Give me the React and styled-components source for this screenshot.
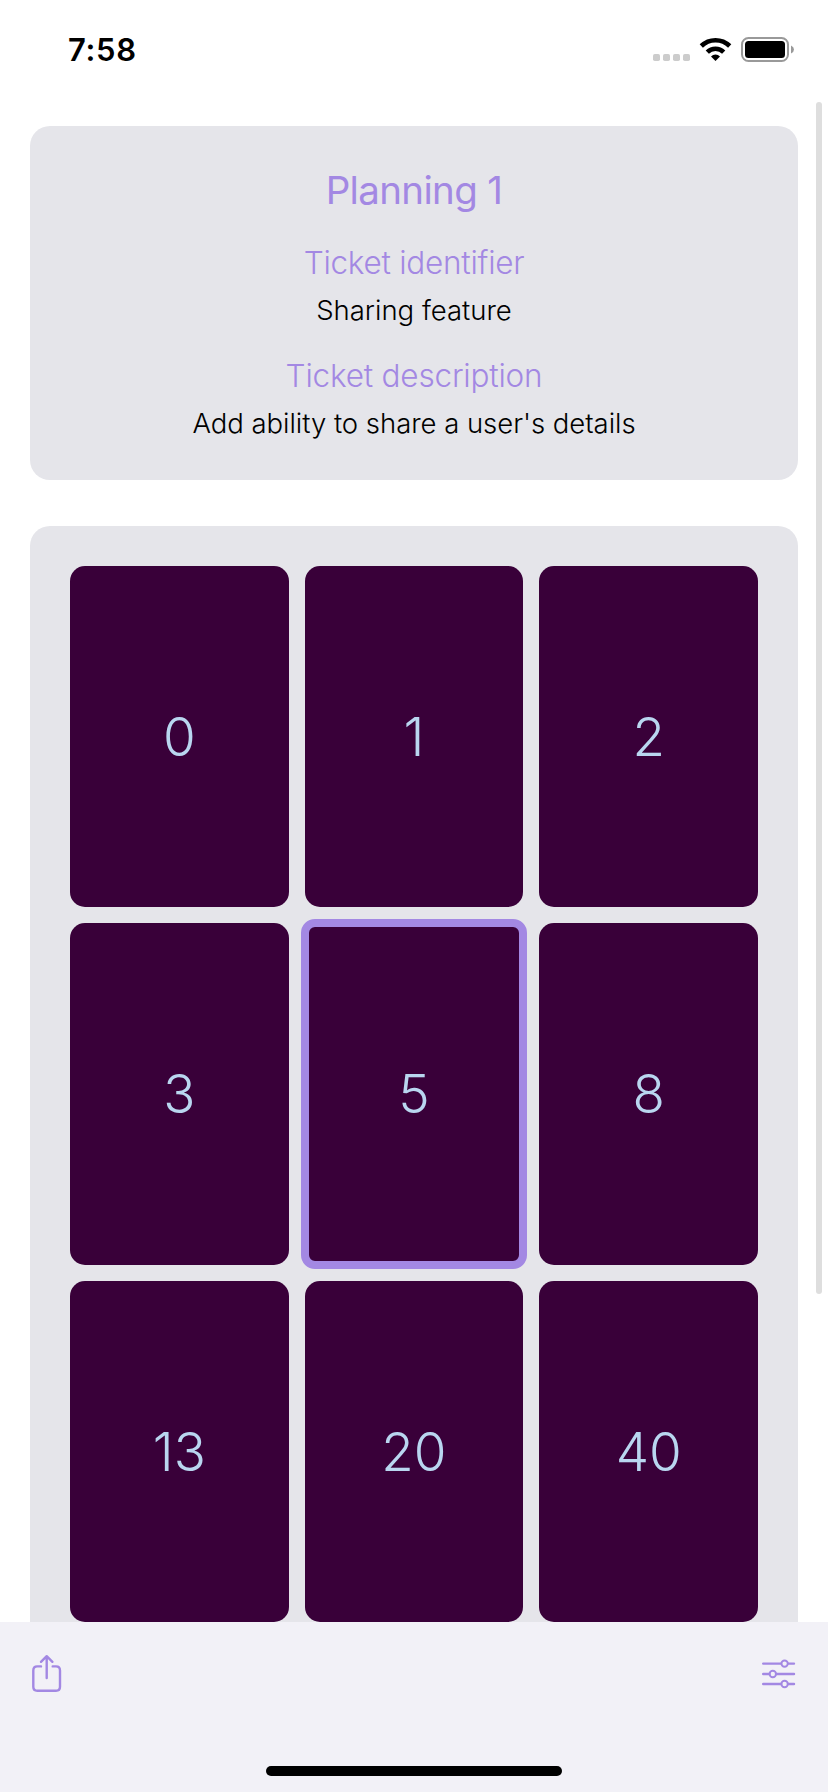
import React from 'react';
import styled, { createGlobalStyle } from 'styled-components';

const GlobalStyle = createGlobalStyle`
  * { box-sizing: border-box; }
  body {
    margin: 0;
    background: #fff;
    font-family: Inter, "Liberation Sans", sans-serif;
  }
`;

const Screen = styled.div`
  position: relative;
  display: flex;
  flex-direction: column;
  width: 828px;
  height: 1792px;
  overflow: hidden;
  background: #fff;
`;

const StatusBar = styled.header`
  display: flex;
  flex: none;
  justify-content: space-between;
  height: 96px;
  padding: 34px 34px 0 68px;
`;

const Clock = styled.time`
  height: 32px;
  line-height: 32px;
  font-size: 31px;
  font-weight: 600;
  letter-spacing: 0.7px;
  color: #000;
`;

const StatusIcons = styled.svg`
  display: block;
  width: 142px;
  height: 32px;
`;

const Content = styled.main`
  display: flex;
  flex: 1;
  flex-direction: column;
  gap: 46px;
  min-height: 0;
  padding: 30px 30px 0;
  overflow: hidden;
`;

const Panel = styled.section`
  flex: none;
  padding: 40px;
  border-radius: 20px;
  background: #e5e5ea;
`;

const TicketPanel = styled(Panel)`
  display: flex;
  flex-direction: column;
  align-items: center;
  height: 354px;
  white-space: nowrap;
`;

const Title = styled.h1`
  margin: 0;
  line-height: 48px;
  font-size: 38.5px;
  font-weight: 400;
  letter-spacing: ${(p) => p.$spacing}px;
  color: #a388e3;
`;

const Label = styled.h2`
  margin: 30px 0 0;
  line-height: 38px;
  font-size: 31.5px;
  font-weight: 300;
  letter-spacing: ${(p) => p.$spacing}px;
  color: #a388e3;
`;

const Value = styled.p`
  margin: 11px 0 0;
  line-height: 34px;
  font-size: 27.5px;
  font-weight: 300;
  letter-spacing: ${(p) => p.$spacing}px;
  color: #000;
`;

const CardGrid = styled.div`
  display: grid;
  grid-template-columns: repeat(3, 1fr);
  grid-auto-rows: 341.3px;
  gap: 16px;
`;

const Card = styled.button`
  position: relative;
  display: flex;
  align-items: center;
  justify-content: center;
  padding: 1px 0 0;
  border: 0;
  border-radius: 15px;
  background: #390039;
  font-family: inherit;
  font-size: 53px;
  font-weight: 300;
  color: #b9d6f0;

  &::after {
    content: "";
    display: ${(p) => (p.$selected ? 'block' : 'none')};
    position: absolute;
    inset: -4px;
    border: 8px solid #a388e3;
    border-radius: 14px;
  }
`;

const Toolbar = styled.footer`
  display: flex;
  flex: none;
  flex-direction: column;
  justify-content: space-between;
  align-items: center;
  height: 170px;
  padding: 30px 30px 16px;
  background: #f2f1f7;
`;

const Actions = styled.div`
  display: flex;
  justify-content: space-between;
  width: 100%;
`;

const ToolButton = styled.button`
  width: 36px;
  height: 44px;
  padding: 0;
  border: 0;
  background: none;
  color: #a388e3;

  svg { display: block; }
`;

const HomeIndicator = styled.div`
  width: 296px;
  height: 10px;
  border-radius: 5px;
  background: #000;
`;

const ScrollThumb = styled.div`
  position: absolute;
  top: 102px;
  right: 6px;
  width: 6px;
  height: 1192px;
  border-radius: 3px;
  background: #dedede;
`;

const cards = [0, 1, 2, 3, 5, 8, 13, 20, 40];

export default function App() {
  return (
    <Screen>
      <GlobalStyle />
      <StatusBar>
        <Clock>7:58</Clock>
        <StatusIcons viewBox="652 34 142 32">
          <g fill="#ccc">
            {[653, 663, 673, 683].map((x) => (
              <rect key={x} x={x} y="54" width="7" height="7" rx="1.8" />
            ))}
          </g>
          <path d="M715.5 61 L711 56.4 A6.5 6.5 0 0 1 720 56.4 Z" />
          <g fill="none" stroke="#000" strokeWidth="4.6">
            <path d="M707.3 52.1 A11.7 11.7 0 0 1 723.7 52.1" />
            <path d="M701.3 46 A20.3 20.3 0 0 1 729.7 46" />
          </g>
          <rect x="742" y="38" width="46" height="23" rx="6.5" fill="none" stroke="#999" strokeWidth="2" />
          <rect x="745" y="41" width="40" height="17" rx="3.5" />
          <path d="M791 45.5 Q794 47 794 49.5 Q794 52 791 53.5 Z" fill="#999" />
        </StatusIcons>
      </StatusBar>
      <Content>
        <TicketPanel>
          <Title $spacing={-0.65}>Planning 1</Title>
          <Label $spacing={-0.26}>Ticket identifier</Label>
          <Value $spacing={0}>Sharing feature</Value>
          <Label $spacing={-0.2}>Ticket description</Label>
          <Value $spacing={-0.04}>Add ability to share a user's details</Value>
        </TicketPanel>
        <Panel>
          <CardGrid>
            {cards.map((n) => (
              <Card key={n} $selected={n === 5}>{n}</Card>
            ))}
          </CardGrid>
        </Panel>
      </Content>
      <Toolbar>
        <Actions>
          <ToolButton aria-label="Share">
            <svg width="36" height="44" viewBox="30 1652 36 44" fill="none" stroke="currentColor" strokeWidth="2.4" strokeLinecap="round" strokeLinejoin="round">
              <path d="M41 1666.4 H37.3 Q33.3 1666.4 33.3 1670.4 V1686.7 Q33.3 1690.7 37.3 1690.7 H56 Q60 1690.7 60 1686.7 V1670.4 Q60 1666.4 56 1666.4 H52.7" />
              <path d="M46.7 1678 V1656.3 M41 1661.8 L46.7 1656.2 L52.4 1661.8" />
            </svg>
          </ToolButton>
          <ToolButton aria-label="Settings">
            <svg width="36" height="44" viewBox="762 1652 36 44" fill="none" stroke="currentColor" strokeWidth="2.4" strokeLinecap="round">
              <path d="M763.2 1663.6 H781 M788.2 1663.6 H794 M763.2 1674 H769.2 M776.4 1674 H794 M763.2 1684 H781 M788.2 1684 H794" />
              <circle cx="784.6" cy="1663.6" r="3.2" strokeWidth="2" />
              <circle cx="772.8" cy="1674" r="3.2" strokeWidth="2" />
              <circle cx="784.6" cy="1684" r="3.2" strokeWidth="2" />
            </svg>
          </ToolButton>
        </Actions>
        <HomeIndicator />
      </Toolbar>
      <ScrollThumb />
    </Screen>
  );
}
